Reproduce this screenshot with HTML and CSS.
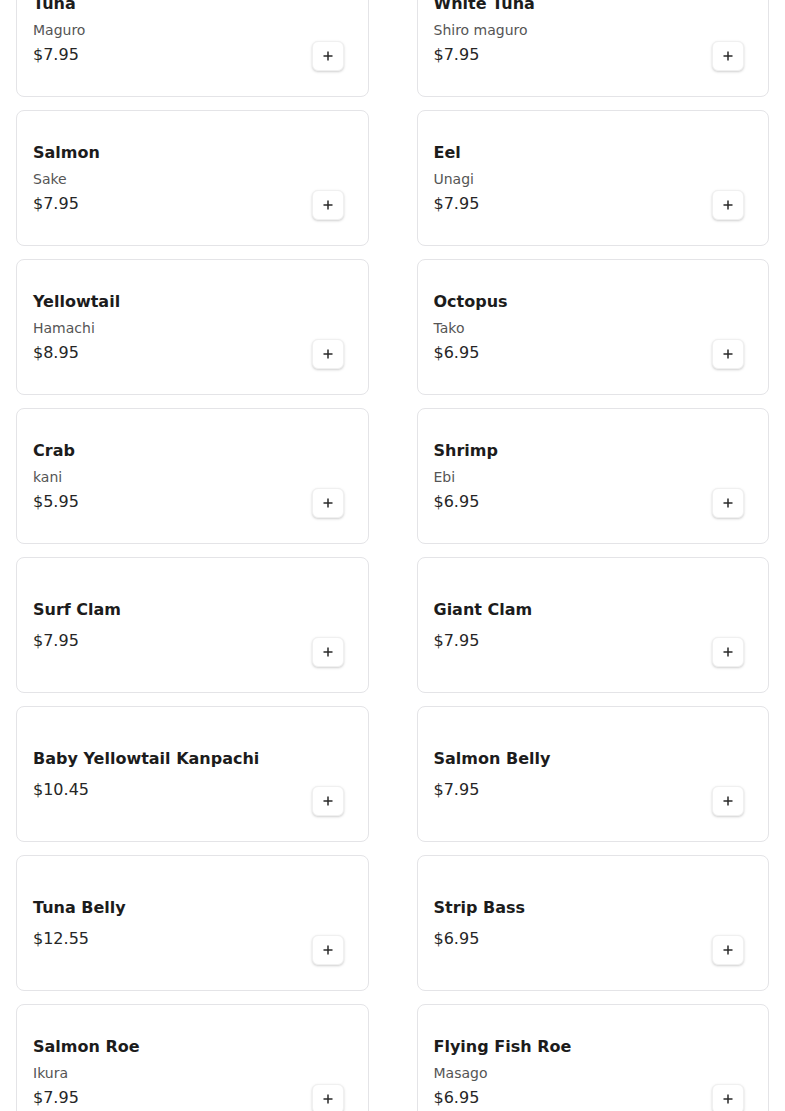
FILE: index.html
```html
<!DOCTYPE html>
<html lang="en">
<head>
<meta charset="utf-8">
<title>Menu</title>
<link rel="stylesheet" href="styles.css">
</head>
<body>
<div class="menu">
  <div class="card"><div class="info"><div class="name">Tuna</div><div class="sub">Maguro</div><div class="price">$7.95</div></div><button class="add"><svg viewBox="0 0 10 10" width="10" height="10"><path d="M5 0.5V9.5M0.5 5H9.5"/></svg></button></div>
  <div class="card"><div class="info"><div class="name">White Tuna</div><div class="sub">Shiro maguro</div><div class="price">$7.95</div></div><button class="add"><svg viewBox="0 0 10 10" width="10" height="10"><path d="M5 0.5V9.5M0.5 5H9.5"/></svg></button></div>
  <div class="card"><div class="info"><div class="name">Salmon</div><div class="sub">Sake</div><div class="price">$7.95</div></div><button class="add"><svg viewBox="0 0 10 10" width="10" height="10"><path d="M5 0.5V9.5M0.5 5H9.5"/></svg></button></div>
  <div class="card"><div class="info"><div class="name">Eel</div><div class="sub">Unagi</div><div class="price">$7.95</div></div><button class="add"><svg viewBox="0 0 10 10" width="10" height="10"><path d="M5 0.5V9.5M0.5 5H9.5"/></svg></button></div>
  <div class="card"><div class="info"><div class="name">Yellowtail</div><div class="sub">Hamachi</div><div class="price">$8.95</div></div><button class="add"><svg viewBox="0 0 10 10" width="10" height="10"><path d="M5 0.5V9.5M0.5 5H9.5"/></svg></button></div>
  <div class="card"><div class="info"><div class="name">Octopus</div><div class="sub">Tako</div><div class="price">$6.95</div></div><button class="add"><svg viewBox="0 0 10 10" width="10" height="10"><path d="M5 0.5V9.5M0.5 5H9.5"/></svg></button></div>
  <div class="card"><div class="info"><div class="name">Crab</div><div class="sub">kani</div><div class="price">$5.95</div></div><button class="add"><svg viewBox="0 0 10 10" width="10" height="10"><path d="M5 0.5V9.5M0.5 5H9.5"/></svg></button></div>
  <div class="card"><div class="info"><div class="name">Shrimp</div><div class="sub">Ebi</div><div class="price">$6.95</div></div><button class="add"><svg viewBox="0 0 10 10" width="10" height="10"><path d="M5 0.5V9.5M0.5 5H9.5"/></svg></button></div>
  <div class="card"><div class="info"><div class="name">Surf Clam</div><div class="price">$7.95</div></div><button class="add"><svg viewBox="0 0 10 10" width="10" height="10"><path d="M5 0.5V9.5M0.5 5H9.5"/></svg></button></div>
  <div class="card"><div class="info"><div class="name">Giant Clam</div><div class="price">$7.95</div></div><button class="add"><svg viewBox="0 0 10 10" width="10" height="10"><path d="M5 0.5V9.5M0.5 5H9.5"/></svg></button></div>
  <div class="card"><div class="info"><div class="name">Baby Yellowtail Kanpachi</div><div class="price">$10.45</div></div><button class="add"><svg viewBox="0 0 10 10" width="10" height="10"><path d="M5 0.5V9.5M0.5 5H9.5"/></svg></button></div>
  <div class="card"><div class="info"><div class="name">Salmon Belly</div><div class="price">$7.95</div></div><button class="add"><svg viewBox="0 0 10 10" width="10" height="10"><path d="M5 0.5V9.5M0.5 5H9.5"/></svg></button></div>
  <div class="card"><div class="info"><div class="name">Tuna Belly</div><div class="price">$12.55</div></div><button class="add"><svg viewBox="0 0 10 10" width="10" height="10"><path d="M5 0.5V9.5M0.5 5H9.5"/></svg></button></div>
  <div class="card"><div class="info"><div class="name">Strip Bass</div><div class="price">$6.95</div></div><button class="add"><svg viewBox="0 0 10 10" width="10" height="10"><path d="M5 0.5V9.5M0.5 5H9.5"/></svg></button></div>
  <div class="card"><div class="info"><div class="name">Salmon Roe</div><div class="sub">Ikura</div><div class="price">$7.95</div></div><button class="add"><svg viewBox="0 0 10 10" width="10" height="10"><path d="M5 0.5V9.5M0.5 5H9.5"/></svg></button></div>
  <div class="card"><div class="info"><div class="name">Flying Fish Roe</div><div class="sub">Masago</div><div class="price">$6.95</div></div><button class="add"><svg viewBox="0 0 10 10" width="10" height="10"><path d="M5 0.5V9.5M0.5 5H9.5"/></svg></button></div>
</div>
</body>
</html>
```
FILE: styles.css
```css
html, body {
  margin: 0;
  padding: 0;
  background: #ffffff;
  overflow: hidden;
}
body {
  font-family: "DejaVu Sans", "Liberation Sans", sans-serif;
  color: #1f1f1f;
}
.menu {
  display: grid;
  grid-template-columns: 1fr 1fr;
  column-gap: 48px;
  row-gap: 13px;
  padding: 0 16px;
  margin-top: -39px;
}
.card {
  box-sizing: border-box;
  height: 136px;
  border: 1px solid #e4e4e7;
  border-radius: 8px;
  padding: 16px;
  display: flex;
  background: #fff;
}
.info {
  flex: 1;
  align-self: center;
  display: flex;
  flex-direction: column;
}
.name {
  font-size: 16px;
  font-weight: bold;
  line-height: 24px;
  margin-bottom: 4px;
  color: #1c1c1c;
}
.sub {
  font-size: 14px;
  line-height: 20px;
  color: #555555;
}
.price {
  font-size: 16px;
  line-height: 24px;
  margin-top: 3px;
  color: #262626;
}
.add {
  align-self: flex-end;
  width: 32px;
  height: 30px;
  margin: 0 8px 9px 0;
  padding: 0;
  border: 1px solid #f0f0f0;
  border-radius: 6px;
  background: #fff;
  box-shadow: 0 1px 3px rgba(0, 0, 0, 0.14), 0 1px 2px rgba(0, 0, 0, 0.06);
  display: flex;
  align-items: center;
  justify-content: center;
}
.add svg path {
  stroke: #2a2a2a;
  stroke-width: 1.5;
  fill: none;
}
```
